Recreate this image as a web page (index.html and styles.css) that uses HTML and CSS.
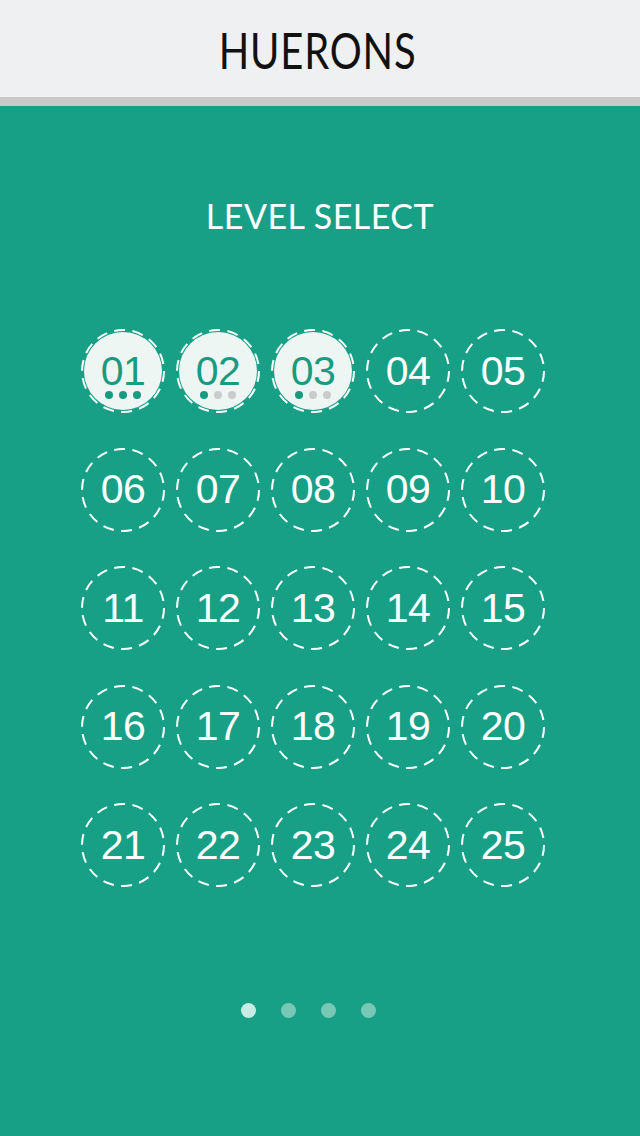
FILE: index.html
```html
<!DOCTYPE html>
<html>
<head>
<meta charset="utf-8">
<link rel="stylesheet" href="styles.css">
</head>
<body>
<svg width="0" height="0" class="defs">
  <defs>
    <symbol id="ring" viewBox="0 0 84 84">
      <circle cx="42" cy="42" r="41" fill="none" stroke="#fff" stroke-width="2" stroke-dasharray="11 7.4"/>
    </symbol>
  </defs>
</svg>
<div class="app">
  <header class="topbar"><h1 class="brand">HUERONS</h1></header>
  <main class="screen">
    <h2 class="title">LEVEL SELECT</h2>
    <div class="grid">
      <div class="cell done"><svg class="ring"><use href="#ring"/></svg><span class="num">01</span><span class="stars"><i class="on"></i><i class="on"></i><i class="on"></i></span></div>
      <div class="cell done"><svg class="ring"><use href="#ring"/></svg><span class="num">02</span><span class="stars"><i class="on"></i><i></i><i></i></span></div>
      <div class="cell done"><svg class="ring"><use href="#ring"/></svg><span class="num">03</span><span class="stars"><i class="on"></i><i></i><i></i></span></div>
      <div class="cell"><svg class="ring"><use href="#ring"/></svg><span class="num">04</span></div>
      <div class="cell"><svg class="ring"><use href="#ring"/></svg><span class="num">05</span></div>
      <div class="cell"><svg class="ring"><use href="#ring"/></svg><span class="num">06</span></div>
      <div class="cell"><svg class="ring"><use href="#ring"/></svg><span class="num">07</span></div>
      <div class="cell"><svg class="ring"><use href="#ring"/></svg><span class="num">08</span></div>
      <div class="cell"><svg class="ring"><use href="#ring"/></svg><span class="num">09</span></div>
      <div class="cell"><svg class="ring"><use href="#ring"/></svg><span class="num">10</span></div>
      <div class="cell"><svg class="ring"><use href="#ring"/></svg><span class="num">11</span></div>
      <div class="cell"><svg class="ring"><use href="#ring"/></svg><span class="num">12</span></div>
      <div class="cell"><svg class="ring"><use href="#ring"/></svg><span class="num">13</span></div>
      <div class="cell"><svg class="ring"><use href="#ring"/></svg><span class="num">14</span></div>
      <div class="cell"><svg class="ring"><use href="#ring"/></svg><span class="num">15</span></div>
      <div class="cell"><svg class="ring"><use href="#ring"/></svg><span class="num">16</span></div>
      <div class="cell"><svg class="ring"><use href="#ring"/></svg><span class="num">17</span></div>
      <div class="cell"><svg class="ring"><use href="#ring"/></svg><span class="num">18</span></div>
      <div class="cell"><svg class="ring"><use href="#ring"/></svg><span class="num">19</span></div>
      <div class="cell"><svg class="ring"><use href="#ring"/></svg><span class="num">20</span></div>
      <div class="cell"><svg class="ring"><use href="#ring"/></svg><span class="num">21</span></div>
      <div class="cell"><svg class="ring"><use href="#ring"/></svg><span class="num">22</span></div>
      <div class="cell"><svg class="ring"><use href="#ring"/></svg><span class="num">23</span></div>
      <div class="cell"><svg class="ring"><use href="#ring"/></svg><span class="num">24</span></div>
      <div class="cell"><svg class="ring"><use href="#ring"/></svg><span class="num">25</span></div>
    </div>
    <div class="pager"><i class="active"></i><i></i><i></i><i></i></div>
  </main>
</div>
</body>
</html>
```

FILE: styles.css
```css
* { box-sizing: border-box; }
html, body { margin: 0; padding: 0; }
body { width: 640px; height: 1136px; overflow: hidden; background: #18a086; font-family: "Liberation Sans", Arial, sans-serif; }
.defs { position: absolute; width: 0; height: 0; }
.app { display: flex; flex-direction: column; height: 1136px; }
.topbar {
  height: 106px;
  background: #eff0f2;
  border-bottom: 9px solid #c9c9c9;
  display: flex;
  align-items: center;
  justify-content: center;
}
.brand {
  margin: 0;
  font-family: "Lato", sans-serif;
  font-weight: 400;
  font-size: 50px;
  color: #111;
  letter-spacing: 1px;
  transform: scaleX(0.8);
  line-height: 1;
  padding-top: 2px;
  margin-right: 4px;
}
.screen {
  flex: 1;
  background: #18a086;
  display: flex;
  flex-direction: column;
  align-items: center;
}
.title {
  margin: 91px 0 0;
  font-family: "Lato", sans-serif;
  font-weight: 400;
  font-size: 34px;
  line-height: 38px;
  color: #fff;
  letter-spacing: 0.5px;
}
.grid {
  margin: 94px 14px 0 0;
  display: grid;
  grid-template-columns: repeat(5, 84px);
  grid-auto-rows: 84px;
  column-gap: 11px;
  row-gap: 34.5px;
}
.cell {
  position: relative;
  width: 84px;
  height: 84px;
  display: flex;
  align-items: center;
  justify-content: center;
}
.ring { position: absolute; left: 0; top: 0; width: 84px; height: 84px; }
.cell.done::before {
  content: "";
  position: absolute;
  left: 3px; top: 3px; right: 3px; bottom: 3px;
  border-radius: 50%;
  background: #eef6f4;
}
.num {
  position: relative;
  font-size: 41px;
  line-height: 1;
  color: #fff;
  letter-spacing: -0.5px;
}
.cell.done .num { color: #1a9b81; }
.stars {
  position: absolute;
  left: 0; right: 0;
  top: 62px;
  display: flex;
  justify-content: center;
  gap: 6px;
}
.stars i { width: 8px; height: 8px; border-radius: 50%; background: #c9cccb; }
.stars i.on { background: #1a9b81; }
.pager {
  margin-top: 116px;
  display: flex;
  gap: 25px;
  margin-right: 23px;
}
.pager i { width: 15px; height: 15px; border-radius: 50%; background: rgba(255,255,255,0.42); }
.pager i.active { background: #c8ece4; }
```
